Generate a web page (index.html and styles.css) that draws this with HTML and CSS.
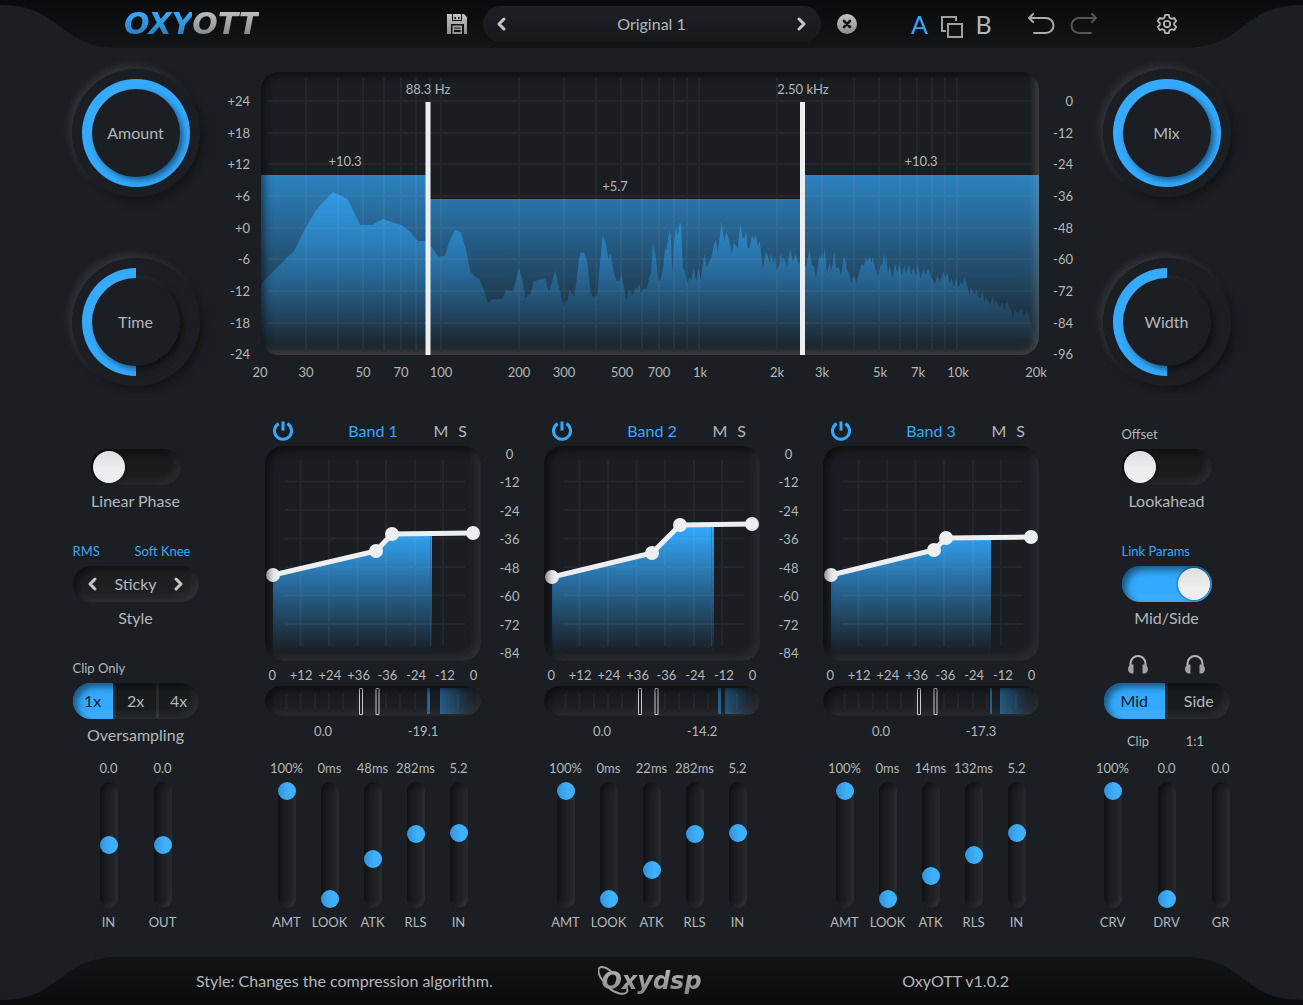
FILE: index.html
```html
<!DOCTYPE html>
<html lang="en">
<head>
<meta charset="utf-8">
<meta name="viewport" content="width=device-width, initial-scale=1">
<title>OxyOTT</title>
<link rel="stylesheet" href="styles.css">
</head>
<body>

<svg class="sprite" aria-hidden="true">
  <defs>
    <linearGradient id="metal" x1="0" y1="0" x2="0" y2="1">
      <stop offset="0" stop-color="#c2c4c6"/><stop offset="1" stop-color="#8b8d8f"/>
    </linearGradient>
    <linearGradient id="transfer" gradientUnits="userSpaceOnUse" x1="0" y1="80" x2="0" y2="208">
      <stop offset="0" stop-color="#33aaff"/><stop offset="1" stop-color="#33aaff" stop-opacity="0"/>
    </linearGradient>
    <linearGradient id="meterFade" gradientUnits="userSpaceOnUse" x1="172" y1="0" x2="210" y2="0">
      <stop offset="0" stop-color="#2d8ed6" stop-opacity=".6"/><stop offset="1" stop-color="#2d8ed6" stop-opacity="0"/>
    </linearGradient>
    <symbol id="chevron-left" viewBox="0 0 12 16"><path d="M9 3 4 8l5 5" fill="none" stroke="#c4c6c8" stroke-width="3" stroke-linecap="round" stroke-linejoin="round"/></symbol>
    <symbol id="chevron-right" viewBox="0 0 12 16"><path d="m3 3 5 5-5 5" fill="none" stroke="#c4c6c8" stroke-width="3" stroke-linecap="round" stroke-linejoin="round"/></symbol>
    <symbol id="power" viewBox="0 0 20 20"><path d="M5.6 2.6a8.5 8.5 0 1 0 8.8 0M10 .5v9" fill="none" stroke="#33aaff" stroke-width="3"/></symbol>
    <symbol id="phones" viewBox="0 0 20 19">
      <path d="M2.500 12V8.500a7.500 7.500 0 0 1 15 0V12" fill="none" stroke="#b5b7b9" stroke-width="2"/>
      <path d="M5.500 9.500v9H4a4 4.500 0 0 1-4-4.500c0-2.500 1.500-4.300 4-4.500zM14.500 9.500v9H16a4 4.500 0 0 0 4-4.500c0-2.500-1.500-4.300-4-4.500z" fill="#a0a2a4"/>
    </symbol>
    <symbol id="band-grid" viewBox="0 0 216 215">
      <path d="M35.500 14V200M64 14V200M92.500 14V200M121 14V200M150 14V200M178 14V200M20 35.500H200M20 64H200M20 92.500H200M20 121H200M20 149.500H200M20 178H200" fill="none" stroke="#fff" stroke-opacity=".045" stroke-width="2"/>
    </symbol>
    <symbol id="meter-grid" viewBox="0 0 216 30">
      <path d="M21.500 8V23M35.500 8V23M50 8V23M64 8V23M78 8V23M92.500 8V23M121 8V23M135 8V23M150 8V23M164 8V23M193 8V23" fill="none" stroke="#fff" stroke-opacity=".04" stroke-width="2"/>
      <path d="M94.500 2.500h3v26h-3zM111 2.500h3v26h-3z" fill="none" stroke="#c9cbcd"/>
    </symbol>
  </defs>
</svg>

<header class="topbar">
  <div class="topbar-left">
    <svg class="corner" viewBox="0 0 120 48" aria-hidden="true"><path d="M0 5C64 5 56 48 120 48H0z" fill="#1b1f23"/></svg>
    <h1 class="brand"><span class="brand-blue">OXY</span><span class="brand-gray">OTT</span></h1>
  </div>
  <div class="preset">
    <button class="icon-btn" aria-label="Save preset">
      <svg width="20" height="20" viewBox="0 0 20 20"><path fill="url(#metal)" fill-rule="evenodd" d="M0 0h5v7h10V0h2l3 3v17h-3v-10H4v10H0zM6 0h8v6H6zM7.500 3v2h1.500V3zm3.500 0v2h1.500V3zM5.500 11.500h9.500v8.500H5.500zM7 13.500h6.500v1H7zM7 16h6.500v2H7z"/></svg>
    </button>
    <div class="preset-pill">
      <button class="icon-btn" aria-label="Previous preset"><svg width="12" height="16"><use href="#chevron-left"/></svg></button>
      <button class="preset-name">Original 1</button>
      <button class="icon-btn" aria-label="Next preset"><svg width="12" height="16"><use href="#chevron-right"/></svg></button>
    </div>
    <button class="icon-btn" aria-label="Delete preset">
      <svg width="20" height="20" viewBox="0 0 20 20"><circle cx="10" cy="10" r="10" fill="url(#metal)"/><path d="m7 7 6 6M13 7l-6 6" stroke="#111213" stroke-width="2.600" stroke-linecap="round"/></svg>
    </button>
  </div>
  <div class="topbar-right">
    <div class="compare">
      <button class="state is-on">A</button>
      <button class="icon-btn" aria-label="Copy A to B">
        <svg width="22" height="22" viewBox="0 0 22 22" fill="none" stroke="#9c9ea0" stroke-width="2"><path d="M15 5V1H1v14h4"/><path d="M7 8h14v13H7z"/></svg>
      </button>
      <button class="state">B</button>
    </div>
    <div class="history">
      <button class="icon-btn" aria-label="Undo">
        <svg width="28" height="22" viewBox="0 0 28 22" fill="none" stroke="#a8aaac" stroke-width="2" stroke-linecap="round" stroke-linejoin="round"><path d="M2 5h17a7.500 7.500 0 0 1 0 15H7M6 1 2 5l4 4"/></svg>
      </button>
      <button class="icon-btn" aria-label="Redo" disabled>
        <svg width="28" height="22" viewBox="0 0 28 22" fill="none" stroke="#54565a" stroke-width="2" stroke-linecap="round" stroke-linejoin="round"><path d="M26 5H9a7.500 7.500 0 0 0 0 15h12M22 1l4 4-4 4"/></svg>
      </button>
    </div>
    <button class="icon-btn settings" aria-label="Settings">
      <svg width="22" height="22" viewBox="0 0 24 24" fill="none" stroke="#b2b4b6" stroke-width="2" stroke-linejoin="round"><circle cx="12" cy="12" r="3.500"/><path d="M10 2h4l.7 3 2.300 1.300 3-.9 2 3.400-2.200 2.200v2l2.200 2.200-2 3.400-3-.9-2.300 1.300-.7 3h-4l-.7-3L7 17.700l-3 .9-2-3.400L4.200 13v-2L2 8.800l2-3.400 3 .9L9.300 5z"/></svg>
    </button>
    <svg class="corner" viewBox="0 0 120 48" aria-hidden="true"><path d="M120 5C56 5 64 48 0 48H120z" fill="#1b1f23"/></svg>
  </div>
</header>

<main class="plugin">
  <section class="side side-left">
    <div class="knobs">
      <label class="knob"><span class="ring" style="--value:100"></span><span class="cap">Amount</span><input type="range" value="100"></label>
      <label class="knob"><span class="ring" style="--value:50"></span><span class="cap">Time</span><input type="range" value="50"></label>
    </div>
    <div class="field">
      <div class="caption narrow"></div>
      <input class="toggle" type="checkbox" id="linear">
      <label class="title" for="linear">Linear Phase</label>
    </div>
    <div class="field">
      <div class="caption"><button class="mini is-on">RMS</button><button class="mini is-on inset">Soft Knee</button></div>
      <div class="stepper">
        <button class="icon-btn" aria-label="Previous style"><svg width="12" height="16"><use href="#chevron-left"/></svg></button>
        <output id="style">Sticky</output>
        <button class="icon-btn" aria-label="Next style"><svg width="12" height="16"><use href="#chevron-right"/></svg></button>
      </div>
      <label class="title" for="style">Style</label>
    </div>
    <div class="field">
      <div class="caption"><button class="mini">Clip Only</button></div>
      <div class="segments" role="radiogroup" aria-labelledby="os-title">
        <label><input type="radio" name="os" checked>1x</label>
        <label><input type="radio" name="os">2x</label>
        <label><input type="radio" name="os">4x</label>
      </div>
      <span class="title" id="os-title">Oversampling</span>
    </div>
    <div class="faders wide">
      <div class="fader"><output>0.0</output><input type="range" id="in" value="50"><label for="in">IN</label></div>
      <div class="fader"><output>0.0</output><input type="range" id="out" value="50"><label for="out">OUT</label></div>
    </div>
  </section>

  <section class="center">
    <svg class="spectrum" viewBox="206 60 891 324">
      <defs>
        <linearGradient id="level" gradientUnits="userSpaceOnUse" x1="0" y1="105" x2="0" y2="352">
          <stop offset="0" stop-color="#33aaff"/><stop offset="1" stop-color="#33aaff" stop-opacity="0"/>
        </linearGradient>
        <linearGradient id="level3" gradientUnits="userSpaceOnUse" x1="0" y1="120" x2="0" y2="861">
          <stop offset="0" stop-color="#33aaff"/><stop offset="1" stop-color="#33aaff" stop-opacity="0"/>
        </linearGradient>
        <clipPath id="screen"><rect x="261" y="72" width="778" height="283" rx="18"/></clipPath>
        <filter id="soft" x="-10%" y="-10%" width="120%" height="120%"><feGaussianBlur stdDeviation="5"/></filter>
      </defs>
      <g clip-path="url(#screen)">
        <rect x="261" y="72" width="778" height="283" fill="#1a1d21"/>
        <path d="M261 175H426V355H261zM430 199H801V355H430zM805 175H1039V355H805z" fill="url(#level)"/>
        <g fill="url(#level3)">
          <path transform="translate(255 65) scale(.33333)" d="M18 657 119 555 150 492 181 438 233 381 277 401 316 481 352 479 384 462 417 473 441 481 466 501 488 528 512 528 525 541 551 575 569 572 585 525 601 494 617 501 632 550 646 620 660 634 674 644 686 675 698 713 712 703 742 702 754 675 774 679 792 610 802 645 811 700 818 690 827 686 836 651 850 644 872 643 881 680 890 655 901 616 910 660 918 686 926 728 931 710 938 705 943 675 957 695 964 655 972 580 977 561 981 564 987 561 997 590 1006 681 1016 697 1027 690 1035 590 1043 512 1051 530 1060 581 1067 566 1077 625 1085 647 1092 649 1100 630 1107 665 1114 705 1121 676 1127 679 1132 692 1140 670 1146 672 1153 658 1159 685 1165 671 1176 670 1183 635 1188 625 1194 540 1200 565V870H18z"/>
          <path transform="translate(650 65) scale(.33333)" d="M15 565 18 580 25 648 32 645 39 610 46 545 50 555 58 495 62 510 67 625 72 540 78 487 83 510 89 475 93 476 99 610 104 617 112 655 119 637 124 645 131 609 139 648 145 609 152 642 163 568 170 606 176 590 184 579 190 548 197 523 203 563 209 520 215 470 222 530 229 500 236 523 246 566 252 533 263 552 271 478 278 520 284 517 289 500 293 549 299 549 306 510 312 525 317 510 324 545 329 527 338 612 348 560 353 570 359 595 363 565 370 597 375 573 380 617 388 597 394 563 397 590 401 577 411 603 421 552 428 588 437 568 446 597 453 580 468 605 479 553 485 600 492 606 498 640 508 570 513 583 516 563 520 585 524 549 531 625 539 590 544 618 553 563 559 610 566 606 573 630 582 570 590 610 598 627 604 655 611 630 618 650 626 630 635 595 641 605 648 580 654 590 659 573 664 595 668 577 676 610 685 637 692 597 697 600 702 565 706 600 708 570 714 625 719 600 727 640 735 595 741 625 748 598 755 630 763 600 768 628 777 600 785 630 790 605 799 637 803 597 812 640 820 612 826 630 835 610 845 640 855 657 862 630 869 650 880 620 886 640 892 622 899 655 905 640 912 665 918 640 925 670 933 650 938 660 943 638 950 655 958 690 963 668 968 680 975 690 980 672 983 692 991 700 998 680 1004 715 1008 690 1012 705 1020 720 1028 695 1034 720 1038 705 1042 718 1050 730 1057 710 1061 732 1065 735 1070 708 1076 725 1083 735 1090 765 1094 728 1098 740 1106 745 1114 730 1122 755 1130 735 1138 755 1142 790 1145 775 1150 810 1155 790 1160 820 1166 850V870H15z"/>
        </g>
        <path d="M306 78V350M338 78V350M363 78V350M384 78V350M401 78V350M416 78V350M430 78V350M441 78V350M519 78V350M564 78V350M596 78V350M621 78V350M642 78V350M659 78V350M674 78V350M687 78V350M699 78V350M777 78V350M822 78V350M854 78V350M879 78V350M900 78V350M917 78V350M932 78V350M945 78V350M957 78V350M268 101H1032M268 133H1032M268 164H1032M268 196H1032M268 228H1032M268 259H1032M268 291H1032M268 323H1032" fill="none" stroke="#fff" stroke-opacity=".045" stroke-width="2"/>
        <rect x="258" y="69" width="800" height="305" rx="20" fill="none" stroke="#000" stroke-opacity=".55" stroke-width="12" filter="url(#soft)"/>
        <rect x="240" y="52" width="803" height="307" rx="20" fill="none" stroke="#b9b4a8" stroke-opacity=".28" stroke-width="14" filter="url(#soft)"/>
      </g>
      <path d="M425.500 102h5v253h-5zM800 102h5v253h-5z" fill="#eceef0"/>
      <g class="tick mid">
        <text x="428" y="94">88.3 Hz</text><text x="803" y="94">2.50 kHz</text>
        <text x="345" y="166">+10.3</text><text x="615" y="191">+5.7</text><text x="921" y="166">+10.3</text>
        <text x="260" y="377">20</text><text x="306" y="377">30</text><text x="363" y="377">50</text><text x="401" y="377">70</text><text x="441" y="377">100</text><text x="519" y="377">200</text><text x="564" y="377">300</text><text x="622" y="377">500</text><text x="659" y="377">700</text><text x="700" y="377">1k</text><text x="777" y="377">2k</text><text x="822" y="377">3k</text><text x="880" y="377">5k</text><text x="918" y="377">7k</text><text x="958" y="377">10k</text><text x="1036" y="377">20k</text>
      </g>
      <g class="tick end">
        <text x="250" y="106">+24</text><text x="250" y="138">+18</text><text x="250" y="169">+12</text><text x="250" y="201">+6</text><text x="250" y="233">+0</text><text x="250" y="264">-6</text><text x="250" y="296">-12</text><text x="250" y="328">-18</text><text x="250" y="359">-24</text>
        <text x="1073" y="106">0</text><text x="1073" y="138">-12</text><text x="1073" y="169">-24</text><text x="1073" y="201">-36</text><text x="1073" y="233">-48</text><text x="1073" y="264">-60</text><text x="1073" y="296">-72</text><text x="1073" y="328">-84</text><text x="1073" y="359">-96</text>
      </g>
    </svg>

    <div class="bands">
      <article class="band">
        <div class="band-head">
          <button class="icon-btn" aria-label="Band 1 power"><svg width="20" height="20"><use href="#power"/></svg></button>
          <h2>Band 1</h2>
          <div class="ms"><button>M</button><button>S</button></div>
        </div>
        <div class="screen">
          <svg viewBox="0 0 216 215">
            <path d="M8 129 111 105 127 88 167 87V210H8z" fill="url(#transfer)"/><path d="M165.500 88V200" stroke="#1b5f94" stroke-opacity=".4"/>
            <use href="#band-grid"/>
            <path d="M8 129 111 105 127 88 208 87" fill="none" stroke="#eceef0" stroke-width="5"/>
            <g fill="#eceef0"><circle cx="8" cy="129" r="7"/><circle cx="111" cy="105" r="7"/><circle cx="127" cy="88" r="7"/><circle cx="208" cy="87" r="7"/></g>
          </svg>
        </div>
        <ul class="x-axis"><li>0</li><li>+12</li><li>+24</li><li>+36</li><li>-36</li><li>-24</li><li>-12</li><li>0</li></ul>
        <div class="screen meter">
          <svg viewBox="0 0 216 30"><path d="M175 2h41v26h-41z" fill="url(#meterFade)"/><path d="M162 2h3v26h-3z" fill="#245f8c"/><use href="#meter-grid"/></svg>
        </div>
        <div class="readout"><output>0.0</output><output>-19.1</output></div>
        <div class="faders">
          <div class="fader"><output>100%</output><input type="range" id="amt1" value="100"><label for="amt1">AMT</label></div>
          <div class="fader"><output>0ms</output><input type="range" id="look1" value="0"><label for="look1">LOOK</label></div>
          <div class="fader"><output>48ms</output><input type="range" id="atk1" value="37"><label for="atk1">ATK</label></div>
          <div class="fader"><output>282ms</output><input type="range" id="rls1" value="60"><label for="rls1">RLS</label></div>
          <div class="fader"><output>5.2</output><input type="range" id="in1" value="61"><label for="in1">IN</label></div>
        </div>
      </article>

      <ul class="y-axis"><li>0</li><li>-12</li><li>-24</li><li>-36</li><li>-48</li><li>-60</li><li>-72</li><li>-84</li></ul>

      <article class="band">
        <div class="band-head">
          <button class="icon-btn" aria-label="Band 2 power"><svg width="20" height="20"><use href="#power"/></svg></button>
          <h2>Band 2</h2>
          <div class="ms"><button>M</button><button>S</button></div>
        </div>
        <div class="screen">
          <svg viewBox="0 0 216 215">
            <path d="M8 131 108 107 136 79 170 79V210H8z" fill="url(#transfer)"/><path d="M167.500 80V200" stroke="#1b5f94" stroke-opacity=".4"/>
            <use href="#band-grid"/>
            <path d="M8 131 108 107 136 79 208 78" fill="none" stroke="#eceef0" stroke-width="5"/>
            <g fill="#eceef0"><circle cx="8" cy="131" r="7"/><circle cx="108" cy="107" r="7"/><circle cx="136" cy="79" r="7"/><circle cx="208" cy="78" r="7"/></g>
          </svg>
        </div>
        <ul class="x-axis"><li>0</li><li>+12</li><li>+24</li><li>+36</li><li>-36</li><li>-24</li><li>-12</li><li>0</li></ul>
        <div class="screen meter">
          <svg viewBox="0 0 216 30"><path d="M181 2h35v26h-35z" fill="url(#meterFade)"/><path d="M174 2h3v26h-3z" fill="#245f8c"/><use href="#meter-grid"/></svg>
        </div>
        <div class="readout"><output>0.0</output><output>-14.2</output></div>
        <div class="faders">
          <div class="fader"><output>100%</output><input type="range" id="amt2" value="100"><label for="amt2">AMT</label></div>
          <div class="fader"><output>0ms</output><input type="range" id="look2" value="0"><label for="look2">LOOK</label></div>
          <div class="fader"><output>22ms</output><input type="range" id="atk2" value="27"><label for="atk2">ATK</label></div>
          <div class="fader"><output>282ms</output><input type="range" id="rls2" value="60"><label for="rls2">RLS</label></div>
          <div class="fader"><output>5.2</output><input type="range" id="in2" value="61"><label for="in2">IN</label></div>
        </div>
      </article>

      <ul class="y-axis"><li>0</li><li>-12</li><li>-24</li><li>-36</li><li>-48</li><li>-60</li><li>-72</li><li>-84</li></ul>

      <article class="band">
        <div class="band-head">
          <button class="icon-btn" aria-label="Band 3 power"><svg width="20" height="20"><use href="#power"/></svg></button>
          <h2>Band 3</h2>
          <div class="ms"><button>M</button><button>S</button></div>
        </div>
        <div class="screen">
          <svg viewBox="0 0 216 215">
            <path d="M8 129 111 104 123 92 168 92V210H8z" fill="url(#transfer)"/>
            <use href="#band-grid"/>
            <path d="M8 129 111 104 123 92 208 91" fill="none" stroke="#eceef0" stroke-width="5"/>
            <g fill="#eceef0"><circle cx="8" cy="129" r="7"/><circle cx="111" cy="104" r="7"/><circle cx="123" cy="92" r="7"/><circle cx="208" cy="91" r="7"/></g>
          </svg>
        </div>
        <ul class="x-axis"><li>0</li><li>+12</li><li>+24</li><li>+36</li><li>-36</li><li>-24</li><li>-12</li><li>0</li></ul>
        <div class="screen meter">
          <svg viewBox="0 0 216 30"><path d="M177 2h39v26h-39z" fill="url(#meterFade)"/><path d="M167 2h2v26h-2z" fill="#245f8c"/><use href="#meter-grid"/></svg>
        </div>
        <div class="readout"><output>0.0</output><output>-17.3</output></div>
        <div class="faders">
          <div class="fader"><output>100%</output><input type="range" id="amt3" value="100"><label for="amt3">AMT</label></div>
          <div class="fader"><output>0ms</output><input type="range" id="look3" value="0"><label for="look3">LOOK</label></div>
          <div class="fader"><output>14ms</output><input type="range" id="atk3" value="21"><label for="atk3">ATK</label></div>
          <div class="fader"><output>132ms</output><input type="range" id="rls3" value="41"><label for="rls3">RLS</label></div>
          <div class="fader"><output>5.2</output><input type="range" id="in3" value="61"><label for="in3">IN</label></div>
        </div>
      </article>
    </div>
  </section>

  <section class="side side-right">
    <div class="knobs">
      <label class="knob"><span class="ring" style="--value:100"></span><span class="cap">Mix</span><input type="range" value="100"></label>
      <label class="knob"><span class="ring" style="--value:50"></span><span class="cap">Width</span><input type="range" value="50"></label>
    </div>
    <div class="field">
      <div class="caption narrow"><button class="mini">Offset</button></div>
      <input class="toggle" type="checkbox" id="look">
      <label class="title" for="look">Lookahead</label>
    </div>
    <div class="field">
      <div class="caption narrow"><button class="mini is-on">Link Params</button></div>
      <input class="toggle" type="checkbox" id="ms" checked>
      <label class="title" for="ms">Mid/Side</label>
    </div>
    <div class="field">
      <div class="caption pair listen">
        <button class="icon-btn" aria-label="Listen to mid"><svg width="20" height="19"><use href="#phones"/></svg></button>
        <button class="icon-btn" aria-label="Listen to side"><svg width="20" height="19"><use href="#phones"/></svg></button>
      </div>
      <div class="segments" role="radiogroup" aria-label="Channel">
        <label><input type="radio" name="channel" checked>Mid</label>
        <label><input type="radio" name="channel">Side</label>
      </div>
      <div class="caption pair options"><button class="mini">Clip</button><button class="mini">1:1</button></div>
    </div>
    <div class="faders wide">
      <div class="fader"><output>100%</output><input type="range" id="crv" value="100"><label for="crv">CRV</label></div>
      <div class="fader"><output>0.0</output><input type="range" id="drv" value="0"><label for="drv">DRV</label></div>
      <div class="fader"><output>0.0</output><div class="track" role="meter" aria-label="Gain reduction" aria-valuenow="0"></div><span>GR</span></div>
    </div>
  </section>
</main>

<footer class="bottombar">
  <svg class="corner" viewBox="0 0 120 48" aria-hidden="true"><path d="M0 43C64 43 56 0 120 0H0z" fill="#1b1f23"/></svg>
  <p class="hint">Style: Changes the compression algorithm.</p>
  <div class="maker">
    <span>Oxydsp</span>
    <svg width="40" height="30" viewBox="0 0 40 30" fill="none" stroke="#9c9ea0" aria-hidden="true"><path d="M5 15C-1 7-1 1 4 1c4 0 8 3 12 7" stroke-width="2"/><path d="M10 21c6 6 16 9 19 5 1-2 0-5-2-8" stroke-width="2"/></svg>
  </div>
  <p class="version">OxyOTT v1.0.2</p>
  <svg class="corner" viewBox="0 0 120 48" aria-hidden="true"><path d="M120 43C56 43 64 0 0 0H120z" fill="#1b1f23"/></svg>
</footer>
</body>
</html>
```

FILE: styles.css
```css
:root {
  --panel: #1b1f23;
  --text: #b4b7ba;
  --blue: #33aaff;
  --inset: inset 4px 4px 7px rgba(0, 0, 0, .5), inset -5px -5px 8px rgba(255, 255, 255, .08);
}

* { box-sizing: border-box; }

body {
  margin: 0;
  min-height: 100vh;
  display: flex;
  flex-direction: column;
  background: var(--panel);
  color: var(--text);
  font: 16px/22px Lato, sans-serif;
}

h1, h2, p, ul { margin: 0; padding: 0; }
ul { list-style: none; }
svg { display: block; }
.sprite { position: absolute; width: 0; height: 0; }

button {
  padding: 0;
  border: 0;
  background: none;
  color: inherit;
  font: inherit;
  cursor: pointer;
}
.icon-btn { display: flex; align-items: center; justify-content: center; }
.is-on { color: var(--blue); }

/* Header */
.topbar {
  height: 48px;
  display: grid;
  grid-template-columns: 1fr auto 1fr;
  background: linear-gradient(#0a0b0c, #131415);
}
.corner { width: 120px; height: 48px; flex: none; }
.topbar-left, .topbar-right, .preset { display: flex; align-items: center; }
.topbar-left { gap: 4px; }
.brand { font: italic bold 30px/34px "DejaVu Sans", sans-serif; }
.brand span { background-clip: text; -webkit-background-clip: text; color: transparent; }
.brand-blue { background-image: linear-gradient(#33aaff 20%, #2a7fbe 85%); }
.brand-gray { background-image: linear-gradient(#b9bbbd 20%, #85878a 85%); }
.preset { gap: 16px; }
.preset-pill {
  width: 338px;
  height: 36px;
  padding: 0 12px;
  display: flex;
  align-items: center;
  justify-content: space-between;
  border-radius: 18px;
  background: linear-gradient(#1d2125, #15191c);
}
.topbar-right { padding-left: 54px; }
.compare { display: flex; align-items: center; gap: 12px; }
.compare .icon-btn { padding-top: 6px; }
.state { width: 18px; font-size: 25px; line-height: 32px; }
.history { display: flex; gap: 15px; margin-left: 34px; }
.settings { margin: 0 5px 0 auto; }

/* Body */
.plugin {
  flex: 1;
  display: grid;
  grid-template-columns: 141px minmax(0, 1fr) 141px;
  padding: 0 65px 26px;
}
.side { display: flex; flex-direction: column; align-items: center; }
.side-right { padding-right: 2px; }
.center { display: flex; flex-direction: column; padding-top: 12px; }

.knobs { display: grid; gap: 61px; padding: 21px 0 39px; }
.knob {
  position: relative;
  width: 128px;
  height: 128px;
  display: grid;
  place-items: center;
  border-radius: 50%;
  box-shadow: -4px -4px 7px rgba(255, 255, 255, .09), 4px 4px 8px rgba(0, 0, 0, .35);
}
.knob > * { grid-area: 1 / 1; }
.ring {
  width: 108px;
  height: 108px;
  border-radius: 50%;
  background: conic-gradient(from 180deg, var(--blue) calc(var(--value) * 1%), transparent 0);
}
.cap {
  width: 88px;
  height: 88px;
  display: grid;
  place-items: center;
  border-radius: 50%;
  background: var(--panel);
  box-shadow: 3px 3px 6px rgba(0, 0, 0, .5), -2px -2px 5px rgba(255, 255, 255, .07);
}
.knob input { width: 100%; height: 100%; margin: 0; opacity: 0; }

.field { display: flex; flex-direction: column; align-items: center; }
.field + .field { margin-top: 30px; }
.caption { width: 126px; height: 18px; margin-bottom: 6px; display: flex; justify-content: space-between; align-items: center; }
.caption.narrow { width: 90px; }
.caption.pair { justify-content: center; }
.caption.pair button { width: 57px; }
.caption.listen { margin: -4px 0 10px; }
.caption.options { margin: 13px 0 0; }
.mini { font-size: 13px; line-height: 18px; }
.inset { margin-right: 8px; }
.title { margin-top: 5px; line-height: 22px; }

.toggle {
  appearance: none;
  width: 90px;
  height: 36px;
  margin: 0;
  padding: 2px;
  border-radius: 18px;
  background: #181b1e;
  box-shadow: var(--inset);
}
.toggle::before {
  content: "";
  display: block;
  width: 32px;
  height: 32px;
  border-radius: 50%;
  background: linear-gradient(#dcdee0, #eceef0 60%);
  box-shadow: 0 0 3px rgba(0, 0, 0, .7);
}
.toggle:checked { background: var(--blue); }
.toggle:checked::before { margin-left: auto; }

.stepper {
  width: 126px;
  height: 36px;
  padding: 0 13px;
  display: flex;
  align-items: center;
  justify-content: space-between;
  border-radius: 18px;
  background: #1d2023;
  box-shadow: var(--inset);
}

.segments {
  position: relative;
  width: 126px;
  height: 36px;
  display: flex;
  border-radius: 18px;
  overflow: hidden;
  background: #191c1f;
}
.segments::after, .screen::after {
  content: "";
  position: absolute;
  inset: 0;
  border-radius: inherit;
  box-shadow: var(--inset);
  pointer-events: none;
}
.segments label { flex: 1; display: grid; place-items: center; }
.segments label + label { border-left: 3px solid #282b2e; }
.segments input { position: absolute; opacity: 0; }
.segments label:has(:checked) { background: var(--blue); color: #14202b; }

/* Faders */
.faders { display: flex; margin-top: auto; font-size: 13px; line-height: 18px; }
.fader { width: 43px; display: flex; flex-direction: column; align-items: center; gap: 5px; white-space: nowrap; }
.wide .fader { width: 54px; }
.fader input, .track {
  appearance: none;
  writing-mode: vertical-lr;
  direction: rtl;
  width: 18px;
  height: 126px;
  margin: 0;
  border-radius: 9px;
  background: linear-gradient(90deg, #15181a, #25282a);
  box-shadow: inset 2px 4px 5px rgba(0, 0, 0, .35), inset -2px -3px 5px rgba(255, 255, 255, .05);
}
.fader input::-webkit-slider-thumb {
  appearance: none;
  width: 18px;
  height: 18px;
  border-radius: 50%;
  background: linear-gradient(90deg, #3492d6, #3fb0ff 60%);
}

/* Spectrum */
.spectrum { width: 100%; height: auto; }
.tick { fill: var(--text); font-size: 13px; }
.mid { text-anchor: middle; }
.end { text-anchor: end; }

/* Bands */
.bands { flex: 1; display: flex; padding: 36px 58px 0 59px; }
.band { flex: 1; min-width: 0; display: flex; flex-direction: column; }
.band-head {
  height: 22px;
  margin-bottom: 4px;
  padding: 0 8px;
  display: grid;
  grid-template-columns: 1fr auto 1fr;
  align-items: center;
}
.band-head .icon-btn { justify-self: start; }
.band-head h2 { color: var(--blue); font: inherit; }
.ms { display: flex; justify-content: flex-end; gap: 10px; padding-right: 6px; }
.screen { position: relative; border-radius: 18px; overflow: hidden; background: #1a1d21; }
.screen svg { width: 100%; height: auto; }
.screen.meter { border-radius: 15px; }
.x-axis {
  display: grid;
  grid-template-columns: repeat(8, 1fr);
  margin: 5px -7px 2px;
  font-size: 13px;
  line-height: 18px;
  text-align: center;
}
.y-axis {
  width: 63px;
  height: 217px;
  margin-top: 25px;
  padding-right: 6px;
  display: flex;
  flex-direction: column;
  justify-content: space-between;
  font-size: 13px;
  line-height: 18px;
  text-align: center;
}
.readout { display: flex; justify-content: center; margin-top: 6px; font-size: 13px; line-height: 18px; text-align: center; }
.readout output { width: 100px; }

/* Footer */
.bottombar {
  height: 48px;
  display: grid;
  grid-template-columns: 120px 1fr auto 1fr 120px;
  align-items: center;
  background: linear-gradient(#131415, #0b0c0d);
}
.hint { margin-left: 76px; }
.maker { position: relative; font: italic bold 24px/30px "DejaVu Sans", sans-serif; }
.maker span { background: linear-gradient(#b9bbbd, #808285); background-clip: text; -webkit-background-clip: text; color: transparent; }
.maker svg { position: absolute; left: -3px; top: 0; }
.version { justify-self: end; margin-right: 174px; }
```
